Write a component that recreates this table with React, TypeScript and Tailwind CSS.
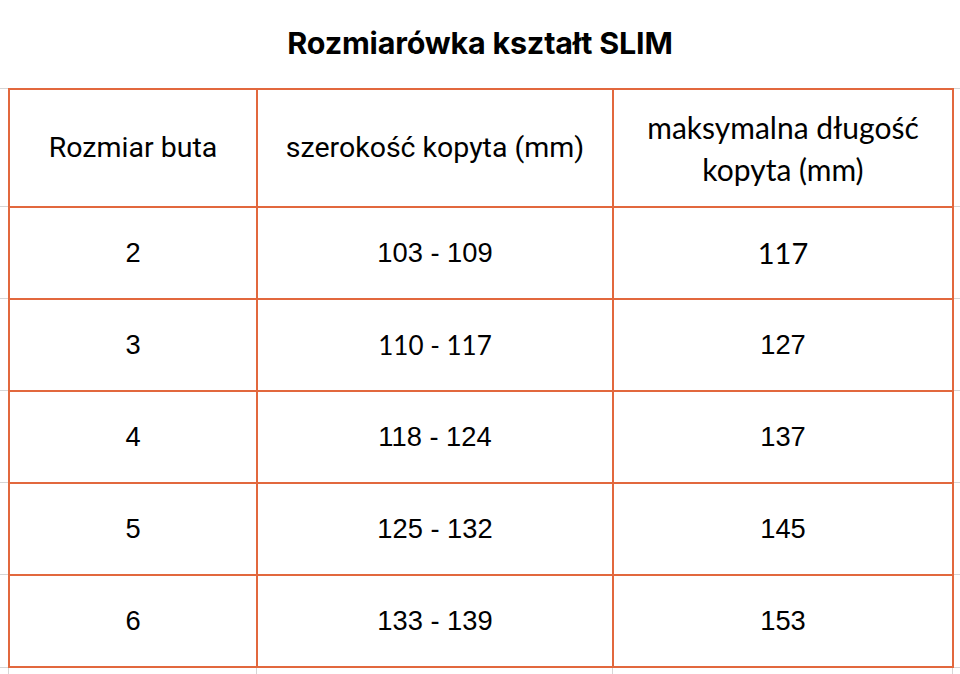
import React from "react";

const ORANGE = "border-[#e2683d]";

type Cell = { text: React.ReactNode; font: string };

const rows: Cell[][] = [
  [
    { text: "2", font: "arial" },
    { text: "103 - 109", font: "arial" },
    { text: "117", font: "latoNum" },
  ],
  [
    { text: "3", font: "arial" },
    { text: "110 - 117", font: "lato" },
    { text: "127", font: "arial" },
  ],
  [
    { text: "4", font: "arial" },
    { text: "118 - 124", font: "arial" },
    { text: "137", font: "arial" },
  ],
  [
    { text: "5", font: "arial" },
    { text: "125 - 132", font: "arial" },
    { text: "145", font: "arial" },
  ],
  [
    { text: "6", font: "arial" },
    { text: "133 - 139", font: "arial" },
    { text: "153", font: "arial" },
  ],
];

function fontClass(f: string) {
  if (f === "lato") return "[font-family:Lato,sans-serif] text-[26px]";
  if (f === "latoNum") return "[font-family:Lato,sans-serif] text-[29px]";
  if (f === "latoHead") return "[font-family:Lato,sans-serif] text-[30px]";
  if (f === "roboto") return "[font-family:Roboto,sans-serif] text-[28.5px]";
  return "[font-family:'Liberation_Sans',Arial,sans-serif] text-[27.3px]";
}

function Row({
  cells,
  height,
  last,
}: {
  cells: React.ReactNode[];
  height: string;
  last?: boolean;
}) {
  const bb = last ? "border-b-2" : "";
  const gb = last ? "border-b" : "";
  return (
    <div className={`flex ${height}`}>
      <div className={`w-[8px] border-t border-[#d6d6d6] ${gb}`} />
      <div
        className={`w-[248px] border-t-2 border-l-2 ${bb} ${ORANGE} flex items-center justify-center`}
      >
        {cells[0]}
      </div>
      <div
        className={`w-[356px] border-t-2 border-l-2 ${bb} ${ORANGE} flex items-center justify-center`}
      >
        {cells[1]}
      </div>
      <div
        className={`w-[342px] border-t-2 border-l-2 border-r-2 ${bb} ${ORANGE} flex items-center justify-center`}
      >
        {cells[2]}
      </div>
      <div className={`w-[6px] border-t border-[#d6d6d6] ${gb}`} />
    </div>
  );
}

export default function App() {
  return (
    <div className="w-[960px] h-[674px] bg-white text-black overflow-hidden">
      <div className="h-[88px] flex items-center justify-center pb-[2px]">
        <h1 className="[font-family:Inter,sans-serif] font-bold text-[30.5px] tracking-[-0.2px]">
          Rozmiarówka kształt SLIM
        </h1>
      </div>
      <Row
        height="h-[118px]"
        cells={[
          <span className={fontClass("roboto")}>Rozmiar buta</span>,
          <span className={fontClass("roboto")}>szerokość kopyta (mm)</span>,
          <span className={`${fontClass("latoHead")} text-center leading-[42px]`}>
            maksymalna długość
            <br />
            kopyta (mm)
          </span>,
        ]}
      />
      {rows.map((r, i) => (
        <Row
          key={i}
          height={i === rows.length - 1 ? "h-[94px]" : "h-[92px]"}
          last={i === rows.length - 1}
          cells={r.map((c, j) => (
            <span key={j} className={fontClass(c.font)}>
              {c.text}
            </span>
          ))}
        />
      ))}
      <div className="flex h-[6px]">
        <div className="w-[8px]" />
        <div className="w-[248px] border-l border-[#d6d6d6]" />
        <div className="w-[356px] border-l border-[#d6d6d6]" />
        <div className="w-[340px] border-l border-[#d6d6d6]" />
        <div className="w-[8px] border-l border-[#d6d6d6]" />
      </div>
    </div>
  );
}
